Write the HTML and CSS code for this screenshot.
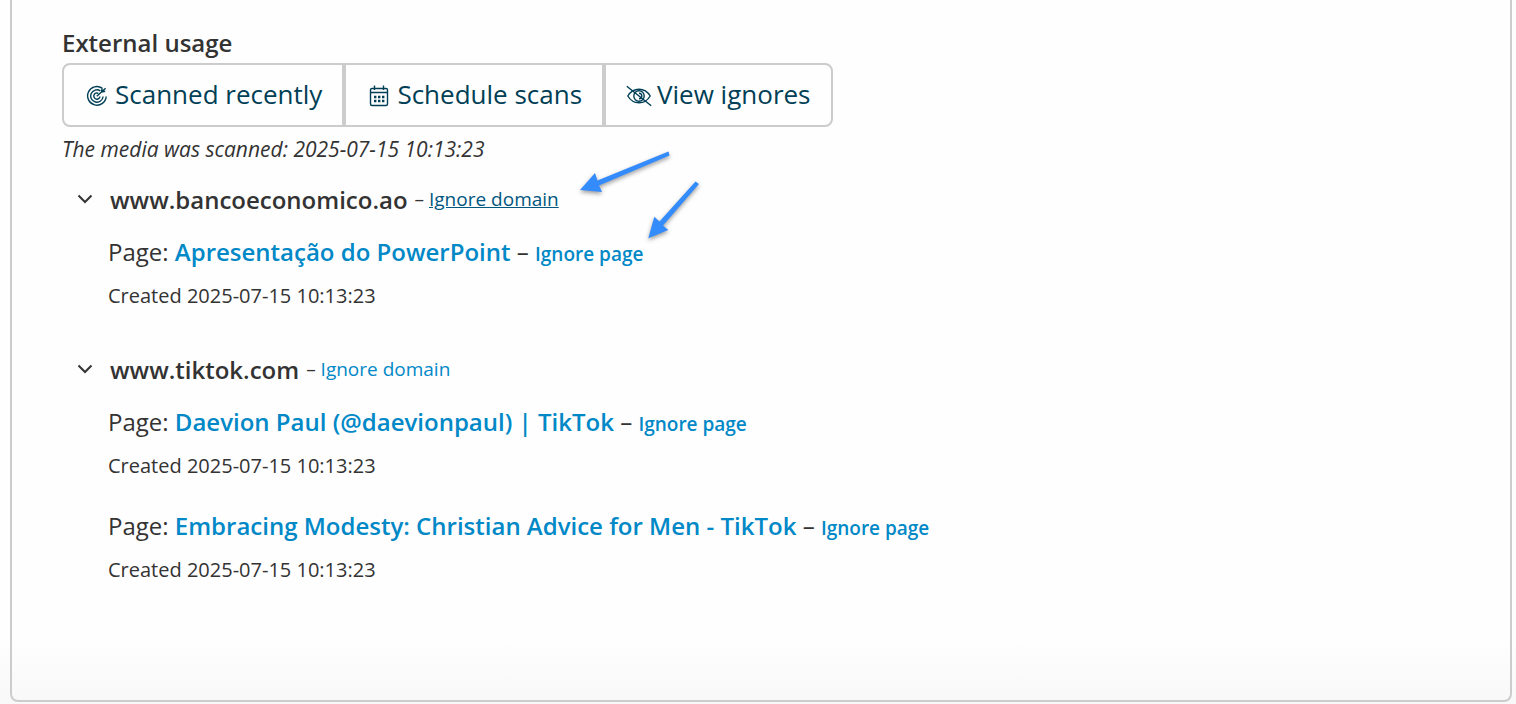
FILE: index.html
```html
<!DOCTYPE html>
<html lang="en">
<head>
    <meta charset="UTF-8">
    <meta name="viewport" content="width=device-width, initial-scale=1.0">
    <title>External usage</title>
    <link rel="stylesheet" href="styles.css">
</head>
<body>
    <main class="panel">
        <h2 class="panel-title">External usage</h2>

        <!-- Actions -->
        <div class="button-group">
            <button type="button">
                <svg class="icon" width="26" height="22" viewBox="0 0 26 22" aria-hidden="true">
                    <path d="M18.200 3.200A9.300 9.300 0 1 0 22.200 11.500M16.300 5.800A6.200 6.200 0 1 0 19.100 11.500M14.300 8.300A3.100 3.100 0 1 0 16 11.500M12.800 11.200L21.600 3.200M17.400 7L18.200 3.200M17.400 7L21.200 6.200"/>
                </svg>
                <span>Scanned recently</span>
            </button>
            <button type="button">
                <svg class="icon" width="26" height="22" viewBox="0 0 26 22" aria-hidden="true">
                    <rect x="4.5" y="3.5" width="17" height="17" rx="1.5"/>
                    <path d="M4.5 7.5H21.5M8.5 0.500V5M17.5 0.500V5"/>
                    <path class="dots" d="M8 12H10.400M12 12H14.400M16 12H18.400M8 16H10.400M12 16H14.400M16 16H18.400"/>
                </svg>
                <span>Schedule scans</span>
            </button>
            <button type="button">
                <svg class="icon" width="26" height="22" viewBox="0 0 26 22" aria-hidden="true">
                    <path d="M1.800 11C4.500 6.500 8.500 4.200 13 4.200S21.500 6.500 24.200 11C21.500 15.500 17.500 17.800 13 17.800S4.500 15.500 1.800 11Z"/>
                    <circle cx="13" cy="11" r="5.200"/>
                    <path d="M13 8.200A2.800 2.800 0 0 1 13 13.800M0.800 1.200L25.200 20.800"/>
                </svg>
                <span>View ignores</span>
            </button>
        </div>
        <p class="scan-date">The media was scanned: 2025-07-15 10:13:23</p>

        <!-- Domains -->
        <section class="domain">
            <div class="domain-header">
                <button type="button" class="toggle" aria-label="Toggle www.bancoeconomico.ao" aria-expanded="true">
                    <svg width="16" height="12" viewBox="0 0 16 12" aria-hidden="true"><path d="M1.500 1.500L8 8L14.500 1.500"/></svg>
                </button>
                <h3>www.bancoeconomico.ao</h3>
                <span class="ignore-domain">– <a href="#" class="active">Ignore domain</a></span>
            </div>
            <div class="page">
                <p class="page-title">Page: <a href="#">Apresentação do PowerPoint</a> – <a href="#" class="ignore-page">Ignore page</a></p>
                <p class="created">Created 2025-07-15 10:13:23</p>
            </div>
        </section>

        <section class="domain">
            <div class="domain-header">
                <button type="button" class="toggle" aria-label="Toggle www.tiktok.com" aria-expanded="true">
                    <svg width="16" height="12" viewBox="0 0 16 12" aria-hidden="true"><path d="M1.500 1.500L8 8L14.500 1.500"/></svg>
                </button>
                <h3>www.tiktok.com</h3>
                <span class="ignore-domain">– <a href="#">Ignore domain</a></span>
            </div>
            <div class="page">
                <p class="page-title">Page: <a href="#">Daevion Paul (@daevionpaul) | TikTok</a> – <a href="#" class="ignore-page">Ignore page</a></p>
                <p class="created">Created 2025-07-15 10:13:23</p>
            </div>
            <div class="page">
                <p class="page-title">Page: <a href="#">Embracing Modesty: Christian Advice for Men - TikTok</a> – <a href="#" class="ignore-page">Ignore page</a></p>
                <p class="created">Created 2025-07-15 10:13:23</p>
            </div>
        </section>

        <!-- Arrows pointing at the ignore links -->
        <svg class="arrows" width="134" height="100" viewBox="0 0 134 100" aria-hidden="true">
            <path d="M10 45L25 28L27.500 35.500L98.500 6.500L99.500 10.500L29 40.500L32 47Z"/>
            <path d="M78.300 93.300L84.300 71.700L89.500 76.500L125.500 36.500L129 39L93 80.500L98.300 85Z"/>
        </svg>
    </main>
</body>
</html>
```

FILE: styles.css
```css
/* General Styles */
* {
    box-sizing: border-box;
}

body {
    font-family: 'Open Sans', 'Noto Sans', sans-serif;
    font-size: 20px;
    color: #333;
    background: linear-gradient(#fefefe 640px, #f8f8f8 704px);
    margin: 0;
    padding: 0 4px 2px 10px;
}

h2, h3, p {
    margin: 0;
}

a {
    color: #0088c7;
    text-decoration: none;
}

a:hover, a.active {
    color: #005780;
    text-decoration: underline;
}

button {
    font: inherit;
    color: inherit;
    background: none;
    border: none;
    cursor: pointer;
}

/* Panel */
.panel {
    position: relative;
    padding: 24px 50px 85px;
    border: 2px solid #ccc;
    border-top: none;
    border-radius: 0 0 8px 8px;
}

.panel-title {
    margin-bottom: 2px;
    font-size: 24px;
    font-weight: 600;
    line-height: 37px;
}

/* Button Group */
.button-group {
    display: flex;
}

.button-group button {
    display: flex;
    align-items: center;
    gap: 5px;
    height: 64px;
    padding: 0 20px 2px;
    font-size: 26px;
    color: #003f56;
    border: 2px solid #ccc;
}

.button-group button:first-child {
    border-radius: 8px 0 0 8px;
}

.button-group button:last-child {
    border-radius: 0 8px 8px 0;
}

.icon {
    margin-top: 4px;
    fill: none;
    stroke: #003f56;
    stroke-width: 1.4;
}

.icon .dots {
    stroke-width: 2.4;
}

.scan-date {
    font-size: 21px;
    font-style: italic;
    line-height: 44px;
}

/* Domains */
.domain {
    margin-bottom: 25px;
}

.domain-header {
    display: flex;
    align-items: center;
    gap: 7px;
    padding-left: 15px;
    line-height: 57px;
}

.domain-header h3 {
    font-size: 24px;
    font-weight: 600;
}

.ignore-domain {
    font-size: 19px;
}

.toggle {
    display: flex;
    width: 26px;
    padding: 0;
}

.toggle svg {
    fill: none;
    stroke: #333;
    stroke-width: 2;
}

.page {
    padding-left: 46px;
}

.page + .page {
    margin-top: 16px;
}

.page-title {
    font-size: 24px;
    line-height: 48px;
}

.page-title a {
    font-weight: 600;
}

.page-title .ignore-page {
    font-size: 19px;
    line-height: 1;
}

.created {
    line-height: 40px;
}

/* Arrows */
.arrows {
    position: absolute;
    top: 145px;
    left: 558px;
    fill: #348bfb;
    filter: drop-shadow(0 2px 2px rgba(0, 0, 0, 0.4));
    pointer-events: none;
}
```
